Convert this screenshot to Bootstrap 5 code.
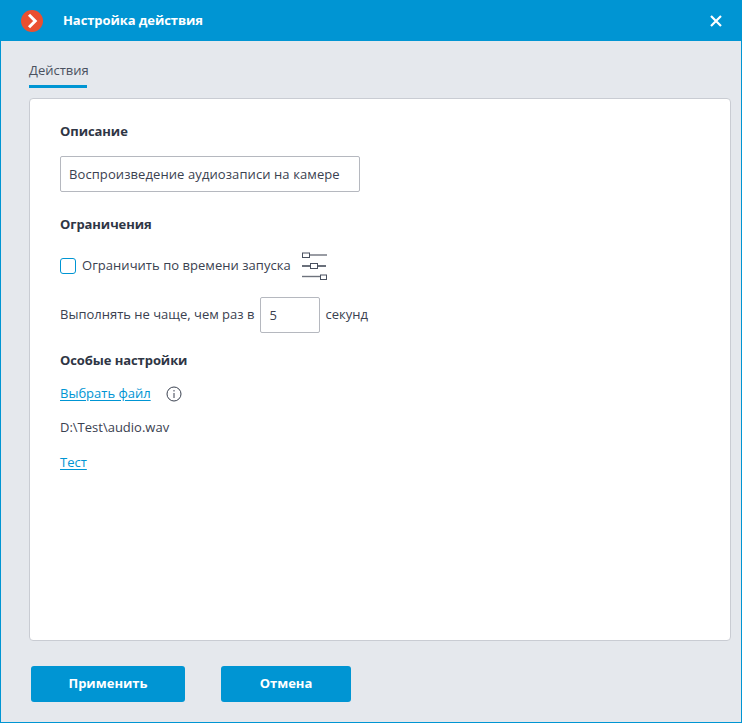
<!DOCTYPE html>
<html lang="ru">
<head>
  <meta charset="UTF-8">
  <title>Настройка действия</title>
  <link href="https://cdn.jsdelivr.net/npm/bootstrap@5.3.0/dist/css/bootstrap.min.css" rel="stylesheet">
  <style>
    html, body { height: 100%; }
    body { font-family: "Open Sans", "Noto Sans", sans-serif; font-size: 13px; color: #3a4150; background: #e5e8ed; }
    .win { height: 723px; border: 1px solid #0095d3; border-top: 0; border-radius: 4px 4px 0 0; }
    .win-head { height: 41px; background: #0095d3; color: #fff; padding: 0 20px 0 21px; margin: 0 -1px; }
    .win-title { font-size: 13px; font-weight: 700; margin-left: 20px; letter-spacing: -.08px; }
    .win-tabs { padding: 20px 0 0 28px; height: 57px; }
    .win-tab { display: inline-block; height: 27px; line-height: 19px; border-bottom: 3px solid #0095d3; font-size: 13px; color: #4a5160; width: 58px; text-align: center; }
    .win-panel { height: 543px; margin: 0 10px 0 28px; background: #fff; border: 1px solid #c9ccd3; border-radius: 4px; padding: 0 30px; }
    .sect { font-weight: 700; font-size: 13px; color: #2f3645; line-height: 18px; letter-spacing: -.08px; }
    .sect-first { margin-top: 23px; }
    .sect-limits { margin-top: 23px; }
    .sect-special { margin-top: 18px; }
    .field { height: 36px; border: 1px solid #b5b8bf; border-radius: 2px; font-size: 13px; color: #3a4150; padding: 0 8px; background: #fff; }
    .field:focus { outline: 0; }
    .field-desc { width: 300px; letter-spacing: .09px; }
    .field-num { width: 60px; margin: 0 5px 0 6px; }
    .tick { width: 16px; height: 16px; border: 1.5px solid #0095d3; border-radius: 3px; background: #fff; }
    .tick-label { margin: 0 10px 0 6px; letter-spacing: .04px; }
    .row-time { margin-top: 17px; height: 32px; }
    .row-limit { margin-top: 15px; }
    .row-file { margin-top: 16px; height: 18px; }
    .lnk { color: #0095d3; text-decoration: underline; text-underline-offset: 2px; }
    .info-ico { margin-left: 15px; }
    .path-line { margin-top: 15px; line-height: 18px; }
    .test-line { margin-top: 17px; line-height: 18px; }
    .foot-btn { height: 36px; background: #0095d3; color: #fff; font-weight: 700; font-size: 13px; border: 0; border-radius: 3px; }
    .btn-apply { width: 154px; }
    .btn-cancel { width: 130px; }
    .win-foot { padding: 25px 0 0 30px; gap: 36px; }
  </style>
</head>
<body>
  <div class="win d-flex flex-column">
    <div class="win-head d-flex align-items-center">
      <svg width="22" height="22" viewBox="0 0 22 22">
        <circle cx="11" cy="11" r="11" fill="#ea4f30"/>
        <path d="M8 4.8 14.2 11 8 17.2" fill="none" stroke="#fff" stroke-width="3"/>
      </svg>
      <span class="win-title">Настройка действия</span>
      <svg class="ms-auto" width="12" height="12" viewBox="0 0 12 12">
        <path d="M1 1 11 11M11 1 1 11" stroke="#fff" stroke-width="2.2"/>
      </svg>
    </div>

    <div class="win-tabs"><span class="win-tab">Действия</span></div>

    <div class="win-panel">
      <div class="sect sect-first">Описание</div>
      <input class="field field-desc d-block mt-3" value="Воспроизведение аудиозаписи на камере">

      <div class="sect sect-limits">Ограничения</div>
      <div class="row-time d-flex align-items-center">
        <span class="tick"></span>
        <span class="tick-label">Ограничить по времени запуска</span>
        <svg width="27" height="28" viewBox="0 0 27 28" fill="none" stroke="#4a5160">
          <path d="M8 3H26" stroke="#6d727c" stroke-width="1.4"/>
          <path d="M1 14H10M17 14H25" stroke="#3a4150" stroke-width="1.6"/>
          <path d="M1 24.500H19" stroke="#6d727c" stroke-width="1.4"/>
          <rect x="1.500" y="1" width="7" height="4.500" fill="#fff"/>
          <rect x="9.500" y="11.500" width="7" height="5" fill="#fff"/>
          <rect x="19.500" y="23" width="6" height="4.500" fill="#fff"/>
        </svg>
      </div>
      <div class="row-limit d-flex align-items-center">
        <span>Выполнять не чаще, чем раз в</span>
        <input class="field field-num" value="5">
        <span>секунд</span>
      </div>

      <div class="sect sect-special">Особые настройки</div>
      <div class="row-file d-flex align-items-center">
        <a class="lnk" href="#">Выбрать файл</a>
        <svg class="info-ico" width="16" height="16" viewBox="0 0 16 16" fill="none" stroke="#3a4150">
          <circle cx="8" cy="8" r="7"/>
          <path d="M8 7V12M8 4V5.500"/>
        </svg>
      </div>
      <div class="path-line">D:\Test\audio.wav</div>
      <div class="test-line"><a class="lnk" href="#">Тест</a></div>
    </div>

    <div class="win-foot d-flex">
      <button class="foot-btn btn-apply">Применить</button>
      <button class="foot-btn btn-cancel">Отмена</button>
    </div>
  </div>

  <script src="https://cdn.jsdelivr.net/npm/bootstrap@5.3.0/dist/js/bootstrap.bundle.min.js"></script>
</body>
</html>
